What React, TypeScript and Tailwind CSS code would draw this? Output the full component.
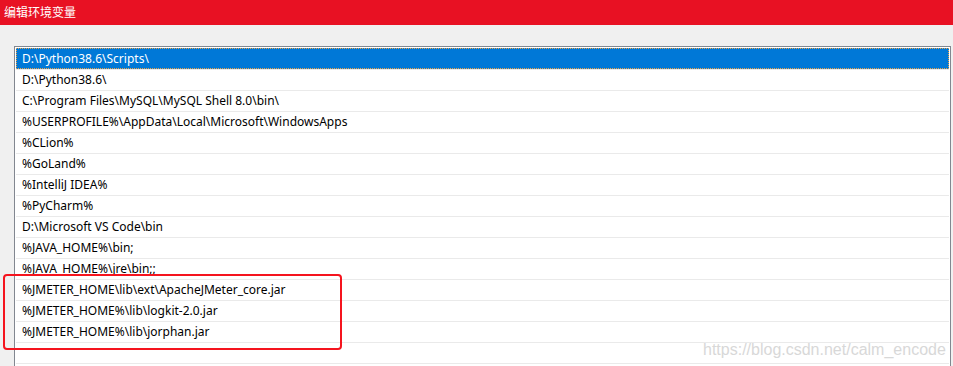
import React from "react";

const paths = [
  "D:\\Python38.6\\Scripts\\",
  "D:\\Python38.6\\",
  "C:\\Program Files\\MySQL\\MySQL Shell 8.0\\bin\\",
  "%USERPROFILE%\\AppData\\Local\\Microsoft\\WindowsApps",
  "%CLion%",
  "%GoLand%",
  "%IntelliJ IDEA%",
  "%PyCharm%",
  "D:\\Microsoft VS Code\\bin",
  "%JAVA_HOME%\\bin;",
  "%JAVA_HOME%\\jre\\bin;;",
  "%JMETER_HOME\\lib\\ext\\ApacheJMeter_core.jar",
  "%JMETER_HOME%\\lib\\logkit-2.0.jar",
  "%JMETER_HOME%\\lib\\jorphan.jar",
  "",
  "",
];

export default function App() {
  return (
    <div
      className="w-[953px] h-[366px] overflow-hidden bg-[#f0f0f0] flex flex-col"
      style={{ fontFamily: '"Noto Sans", "Noto Sans CJK SC", sans-serif' }}
    >
      {/* Title bar */}
      <div className="h-[25px] shrink-0 bg-[#e81123] flex items-center px-[4px] text-[12px] text-white">
        编辑环境变量
      </div>

      {/* List */}
      <div className="relative flex-1 pt-[21px] pl-[14px] pr-[2px]">
        <div className="h-full border border-b-0 border-[#828790] bg-white pt-[1px] pl-[1px] pr-[1px]">
          {paths.map((p, i) => (
            <div
              key={i}
              className={
                i === 0
                  ? "h-[21px] flex items-center pl-[6px] text-[12px] text-white bg-[#0078d7] outline-1 outline-dotted outline-[#e8a24a] -outline-offset-1"
                  : "h-[21px] flex items-center pl-[6px] text-[12px] text-black border-t border-[#eaeaea]"
              }
            >
              {p}
            </div>
          ))}
        </div>

        {/* annotation */}
        <div className="absolute left-[3px] top-[249px] w-[339px] h-[76px] border-2 border-[#f5141e] rounded-[4px]" />

        {/* watermark */}
        <div
          className="absolute left-[703px] top-[313px] text-[16px] text-[#d8d8d8]"
          style={{ fontFamily: '"Liberation Sans", Arial, sans-serif' }}
        >
          https://blog.csdn.net/calm_encode
        </div>
      </div>
    </div>
  );
}
